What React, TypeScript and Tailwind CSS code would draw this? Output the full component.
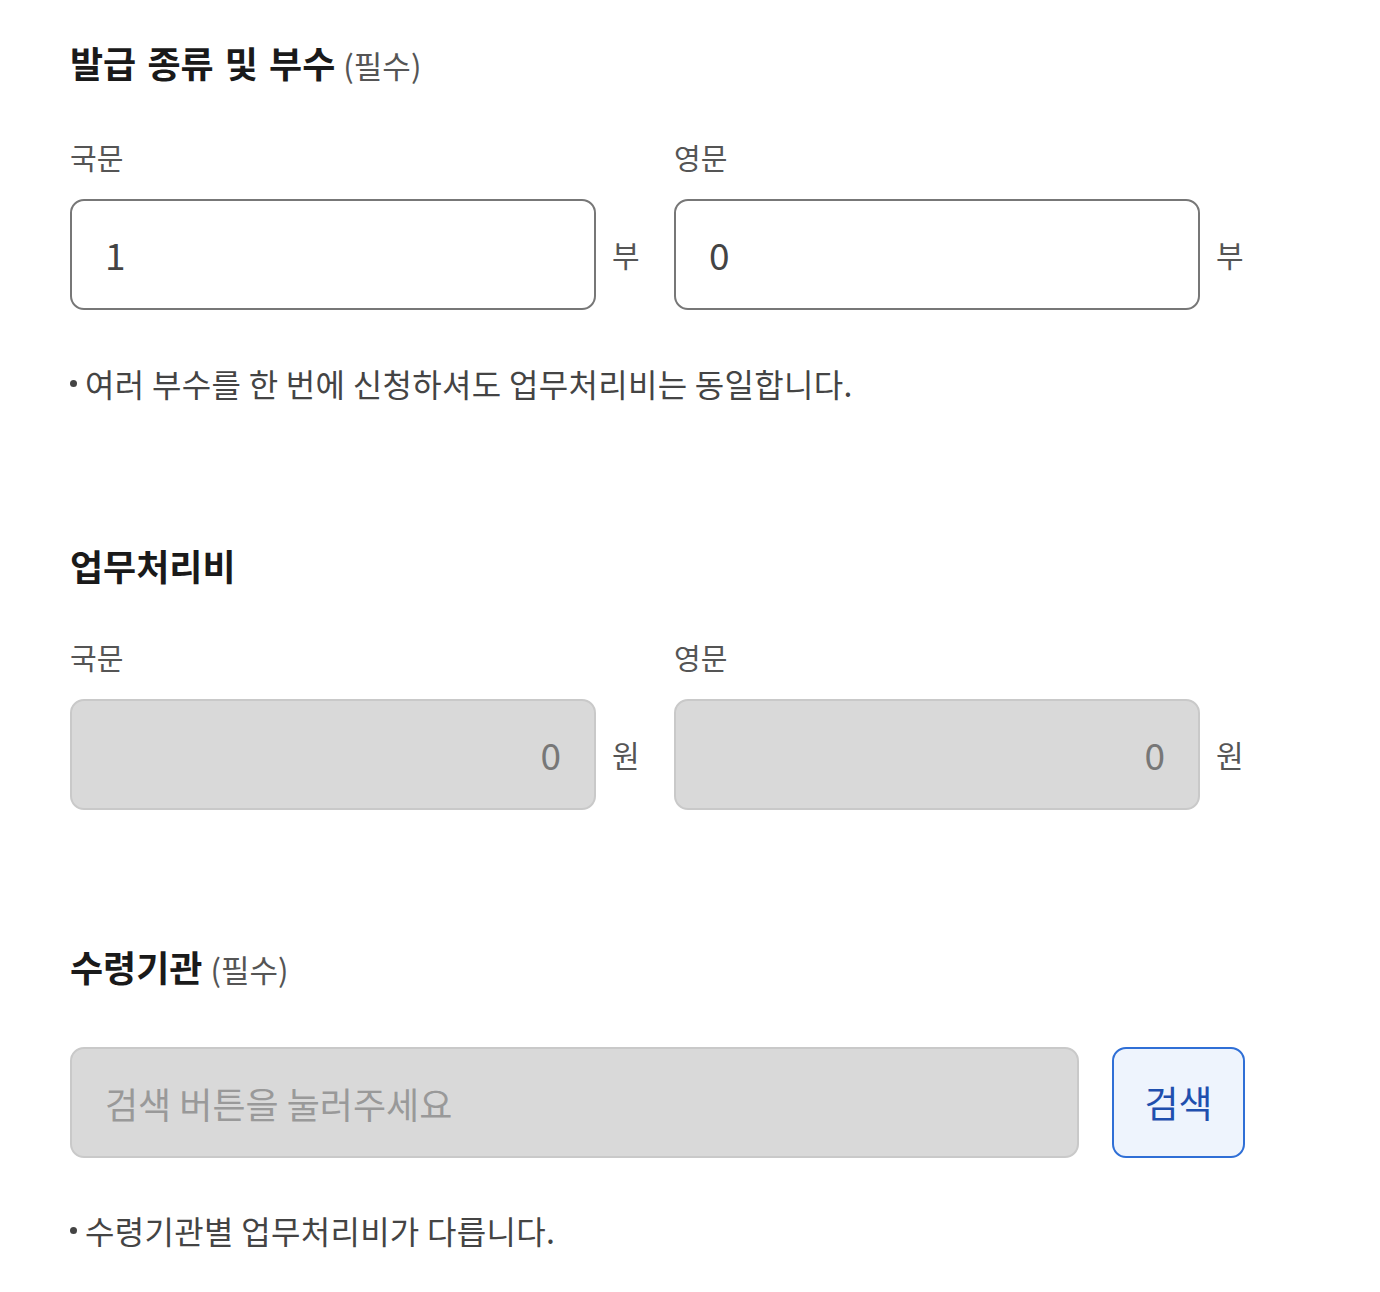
import React from "react"

const font = { fontFamily: '"Noto Sans CJK KR", "Noto Sans", sans-serif' }

function SectionTitle({ title, required }: { title: string; required?: boolean }) {
  return (
    <h2 className="flex items-baseline text-[36px] leading-[48px] font-bold text-[#1a1a1a] [word-spacing:3px]">
      {title}
      {required && (
        <span className="ml-2 text-[31px] font-normal text-[#555]">(필수)</span>
      )}
    </h2>
  )
}

function Field({
  label,
  value,
  unit,
  readOnly,
}: {
  label: string
  value: string
  unit: string
  readOnly?: boolean
}) {
  return (
    <div className="flex w-[604px] flex-col">
      <span className="text-[29px] leading-[40px] text-[#555]">{label}</span>
      <div className="mt-[22px] flex items-center">
        <div
          className={
            readOnly
              ? "flex h-[111px] w-[526px] items-center justify-end rounded-[14px] border-2 border-[#c9c9c9] bg-[#d9d9d9] px-[33px] text-[37px] text-[#777]"
              : "flex h-[111px] w-[526px] items-center rounded-[14px] border-2 border-[#777] bg-white px-[33px] text-[37px] text-[#444]"
          }
        >
          {value}
        </div>
        <span className="ml-[16px] text-[30px] text-[#555]">{unit}</span>
      </div>
    </div>
  )
}

function Note({ children }: { children: React.ReactNode }) {
  return (
    <p className="flex items-center text-[32px] leading-[40px] tracking-[0.3px] text-[#444]">
      <span className="mr-[8px] inline-block h-[7px] w-[7px] rounded-full bg-[#444]" />
      {children}
    </p>
  )
}

export default function App() {
  return (
    <div className="min-h-[1292px] bg-white pl-[70px] pt-[38px]" style={font}>
      <section>
        <SectionTitle title="발급 종류 및 부수" required />
        <div className="mt-[48px] flex">
          <Field label="국문" value="1" unit="부" />
          <Field label="영문" value="0" unit="부" />
        </div>
        <div className="mt-[53px]">
          <Note>여러 부수를 한 번에 신청하셔도 업무처리비는 동일합니다.</Note>
        </div>
      </section>

      <section className="mt-[138px]">
        <SectionTitle title="업무처리비" />
        <div className="mt-[48px] flex">
          <Field label="국문" value="0" unit="원" readOnly />
          <Field label="영문" value="0" unit="원" readOnly />
        </div>
      </section>

      <section className="mt-[132px]">
        <SectionTitle title="수령기관" required />
        <div className="mt-[54px] flex items-center">
          <div className="flex h-[111px] w-[1009px] items-center rounded-[14px] border-2 border-[#c9c9c9] bg-[#d9d9d9] px-[33px] text-[36px] text-[#999]">
            검색 버튼을 눌러주세요
          </div>
          <button className="ml-[33px] flex h-[111px] w-[133px] items-center justify-center rounded-[14px] border-2 border-[#2f6fd6] bg-[#eef4fd] text-[37px] text-[#1f4fae]">
            검색
          </button>
        </div>
        <div className="mt-[52px]">
          <Note>수령기관별 업무처리비가 다릅니다.</Note>
        </div>
      </section>
    </div>
  )
}
